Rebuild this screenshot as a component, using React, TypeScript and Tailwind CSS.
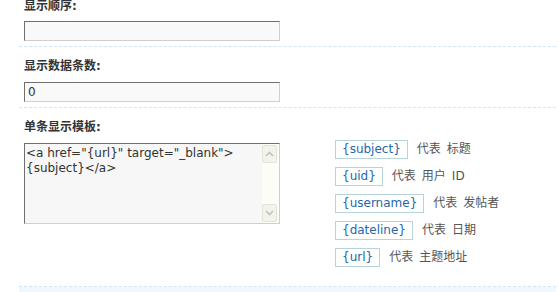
const font = { fontFamily: '"DejaVu Sans", "Noto Sans CJK SC", sans-serif' }

const tips = [
  { tag: '{subject}', desc: ['代表', '标题'] },
  { tag: '{uid}', desc: ['代表', '用户', 'ID'] },
  { tag: '{username}', desc: ['代表', '发帖者'] },
  { tag: '{dateline}', desc: ['代表', '日期'] },
  { tag: '{url}', desc: ['代表', '主题地址'] },
]

function Label({ text }: { text: string }) {
  return (
    <div className="h-[18px] pl-[5px] text-[12px] leading-[18px] font-bold text-[#333]">{text}</div>
  )
}

function TextInput({ value }: { value: string }) {
  return (
    <div className="ml-[5px] h-[20px] w-[256px] border border-t-[#6f6f6f] border-l-[#6f6f6f] border-b-[#cfcfcf] border-r-[#cfcfcf] bg-[#f9f9f9] px-[3px] text-[12px] leading-[18px] text-[#333]">
      {value}
    </div>
  )
}

function ScrollButton({ up }: { up: boolean }) {
  return (
    <div className="flex h-[18px] w-[15px] items-center justify-center rounded-[2px] border border-[#e3e3da] bg-[#f3f3ec]">
      <svg width="9" height="6" viewBox="0 0 9 6">
        <path
          d={up ? 'M1 5 L4.5 1.5 L8 5' : 'M1 1 L4.5 4.5 L8 1'}
          fill="none"
          stroke="#c3c3bb"
          strokeWidth="1.6"
        />
      </svg>
    </div>
  )
}

export default function App() {
  return (
    <div className="h-[292px] w-[559px] overflow-hidden bg-white" style={font}>
      <div className="-mt-[3px] ml-[19px] mr-[3px]">
        {/* 显示顺序 */}
        <div className="border-b border-dashed border-[#cfe6f6] pb-[5px]">
          <Label text="显示顺序:" />
          <div className="mt-[6px]">
            <TextInput value="" />
          </div>
        </div>

        {/* 显示数据条数 */}
        <div className="border-b border-dashed border-[#cfe6f6] pt-[10px] pb-[5px]">
          <Label text="显示数据条数:" />
          <div className="mt-[7px]">
            <TextInput value="0" />
          </div>
        </div>

        {/* 单条显示模板 */}
        <div className="border-b border-dashed border-[#cfe6f6] pt-[10px] pb-[11px]">
          <Label text="单条显示模板:" />
          <div className="mt-[4px] flex items-start">
            <div className="mt-[3px] ml-[5px] flex h-[81px] w-[256px] border border-t-[#6f6f6f] border-l-[#6f6f6f] border-b-[#cfcfcf] border-r-[#cfcfcf] bg-[#f7f7f7]">
              <div className="flex-1 pl-[1px] pt-[2px] text-[12px] leading-[15px] text-[#333]">
                {'<a href="{url}" target="_blank">'}
                <br />
                {'{subject}</a>'}
              </div>
              <div className="flex w-[17px] flex-col justify-between bg-[#fdfdf8] py-[1px] pr-[1px]">
                <ScrollButton up />
                <ScrollButton up={false} />
              </div>
            </div>
            <div className="ml-[55px] flex flex-col">
              {tips.map((t) => (
                <div key={t.tag} className="flex h-[27px] items-start">
                  <span className="h-[19px] border border-[#b9d3dc] px-[6px] text-[12px] leading-[17px] text-[#2467ab]">
                    {t.tag}
                  </span>
                  <span className="ml-[9px] flex gap-[6px] text-[12px] leading-[19px] text-[#555]">
                    {t.desc.map((d) => (
                      <span key={d}>{d}</span>
                    ))}
                  </span>
                </div>
              ))}
            </div>
          </div>
        </div>

        <div className="h-[10px] bg-[#f0f7fd]" />
      </div>
    </div>
  )
}
